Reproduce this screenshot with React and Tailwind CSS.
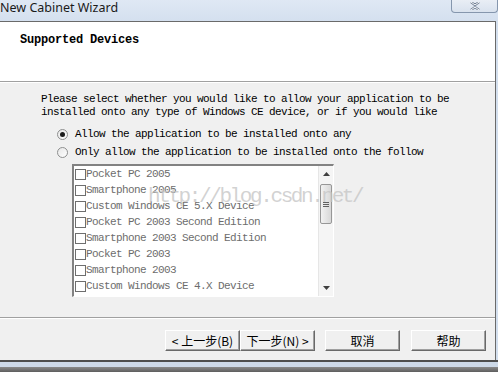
const DEVICES = [
  "Pocket PC 2005",
  "Smartphone 2005",
  "Custom Windows CE 5.X Device",
  "Pocket PC 2003 Second Edition",
  "Smartphone 2003 Second Edition",
  "Pocket PC 2003",
  "Smartphone 2003",
  "Custom Windows CE 4.X Device",
];

const MONO = "font-['Liberation_Mono','DejaVu_Sans_Mono',monospace]";

function Radio({ checked, label }) {
  return (
    <div className="flex h-[16px] items-center">
      <div className="ml-[16px] flex h-[11px] w-[11px] items-center justify-center rounded-full border border-[#8e8f8f] bg-gradient-to-br from-[#e6e6e6] to-white">
        {checked && <div className="h-[5px] w-[5px] rounded-full bg-[#1c1c1c]" />}
      </div>
      <span className={`ml-[7px] text-[11px] tracking-[-0.6px] leading-[16px] text-black ${MONO}`}>{label}</span>
    </div>
  );
}

function WinButton({ children }) {
  return (
    <button className="flex h-[21px] w-[75px] items-center justify-center border border-b-[#696969] border-l-white border-r-[#696969] border-t-white bg-[#f0f0f0] text-[12px] leading-none text-black shadow-[inset_-1px_-1px_0_#a0a0a0] font-['Noto_Sans_CJK_SC','Noto_Sans',sans-serif]">
      {children}
    </button>
  );
}

function Arrow({ up }) {
  return (
    <div className="flex h-[16px] items-center justify-center">
      <svg width="7" height="4" viewBox="0 0 7 4">
        {up ? <polygon points="3.5,0 7,4 0,4" fill="#404040" /> : <polygon points="0,0 7,0 3.5,4" fill="#404040" />}
      </svg>
    </div>
  );
}

export default function App() {
  return (
    <div className="flex h-[372px] w-[498px] flex-col overflow-hidden bg-[#d6e2f0]">
      {/* Title bar */}
      <div className="relative flex h-[21px] shrink-0 items-start bg-gradient-to-b from-[#dfe8f4] to-[#d4e0ef]">
        <span className="text-[12.5px] leading-[15px] text-[#1a1a1a] font-['Noto_Sans','Open_Sans',sans-serif]">
          New Cabinet Wizard
        </span>
        <div className="absolute right-0 top-0 flex h-[13px] w-[47px] items-center justify-center rounded-b-[4px] border border-t-0 border-[#8596ad] bg-gradient-to-b from-[#e9eef5] to-[#d9e2ee]">
          <svg width="10" height="8" viewBox="0 0 10 8">
            <path d="M1 0 L5 3 L9 0 M1 8 L5 5 L9 8" stroke="#6b7a8f" strokeWidth="2.2" fill="none" />
            <path d="M1 0 L5 3 L9 0 M1 8 L5 5 L9 8" stroke="#ffffff" strokeWidth="1" fill="none" />
          </svg>
        </div>
      </div>

      <div className="flex flex-1">
        <div className="flex w-[496px] flex-col border-r border-t border-[#6a6a6a] bg-[#f0f0f0]">
          {/* Header */}
          <div className="h-[60px] shrink-0 border-b border-[#a0a0a0] bg-white pl-[20px] pt-[3px]">
            <span className={`text-[12px] font-bold tracking-[-0.2px] leading-[16px] text-black ${MONO}`}>Supported Devices</span>
          </div>

          {/* Body */}
          <div className="flex flex-1 flex-col border-t border-white">
            <div className="pl-[41px] pt-[10px]">
              <p className={`text-[11px] tracking-[-0.6px] leading-[13px] text-black ${MONO}`}>
                Please select whether you would like to allow your application to be
                <br />
                installed onto any type of Windows CE device, or if you would like
              </p>
              <div className="mt-[7px] flex flex-col gap-[2px]">
                <Radio checked label="Allow the application to be installed onto any" />
                <Radio label="Only allow the application to be installed onto the follow" />
              </div>

              {/* List box */}
              <div className="relative ml-[31px] mt-[4px] flex h-[133px] w-[262px] border-b border-l-2 border-r border-t-2 border-b-white border-l-[#828282] border-r-white border-t-[#828282] bg-white">
                <div className="flex flex-1 flex-col">
                  {DEVICES.map((d) => (
                    <div key={d} className="flex h-[16px] items-center pl-[1px]">
                      <div className="h-[11px] w-[11px] border border-[#6e6e6e] bg-white" />
                      <span className={`text-[11px] tracking-[-0.6px] leading-[16px] text-[#6d6d6d] ${MONO}`}>{d}</span>
                    </div>
                  ))}
                </div>
                <div className="flex w-[15px] flex-col border-l border-[#e6e6e6] bg-[#f5f5f5]">
                  <Arrow up />
                  <div className="mx-[1px] mt-[2px] flex h-[40px] items-center justify-center rounded-[2px] border border-[#979797] bg-gradient-to-r from-[#f2f2f2] to-[#d8d8d8]">
                    <div className="flex flex-col gap-[1px]">
                      <div className="h-px w-[6px] bg-[#606060]" />
                      <div className="h-px w-[6px] bg-[#606060]" />
                      <div className="h-px w-[6px] bg-[#606060]" />
                    </div>
                  </div>
                  <div className="flex-1" />
                  <Arrow />
                </div>
                <span className="pointer-events-none absolute left-[74px] top-[19px] text-[21px] leading-[24px] tracking-[-2.4px] text-[#c4c4c4]/75 font-['Liberation_Mono',monospace]">
                  http://blog.csdn.net/
                </span>
              </div>
            </div>

            {/* Separator */}
            <div className="mt-[20px] border-b border-t border-b-white border-t-[#a0a0a0]" />

            {/* Buttons */}
            <div className="flex pl-[165px] pt-[11px]">
              <WinButton>&lt; 上一步(B)</WinButton>
              <WinButton>下一步(N) &gt;</WinButton>
              <div className="ml-[10px]">
                <WinButton>取消</WinButton>
              </div>
              <div className="ml-[11px]">
                <WinButton>帮助</WinButton>
              </div>
            </div>
          </div>
        </div>
        <div className="flex-1 bg-[#d3dfee]" />
      </div>

      {/* Bottom frame */}
      <div className="h-[12px] shrink-0 border-t-2 border-[#4d4d4d] bg-[#cdd9e8]">
        <div className="mt-[5px] h-[5px] bg-gradient-to-b from-[#8a8a8a] to-[#5e5e5e]" />
      </div>
    </div>
  );
}
